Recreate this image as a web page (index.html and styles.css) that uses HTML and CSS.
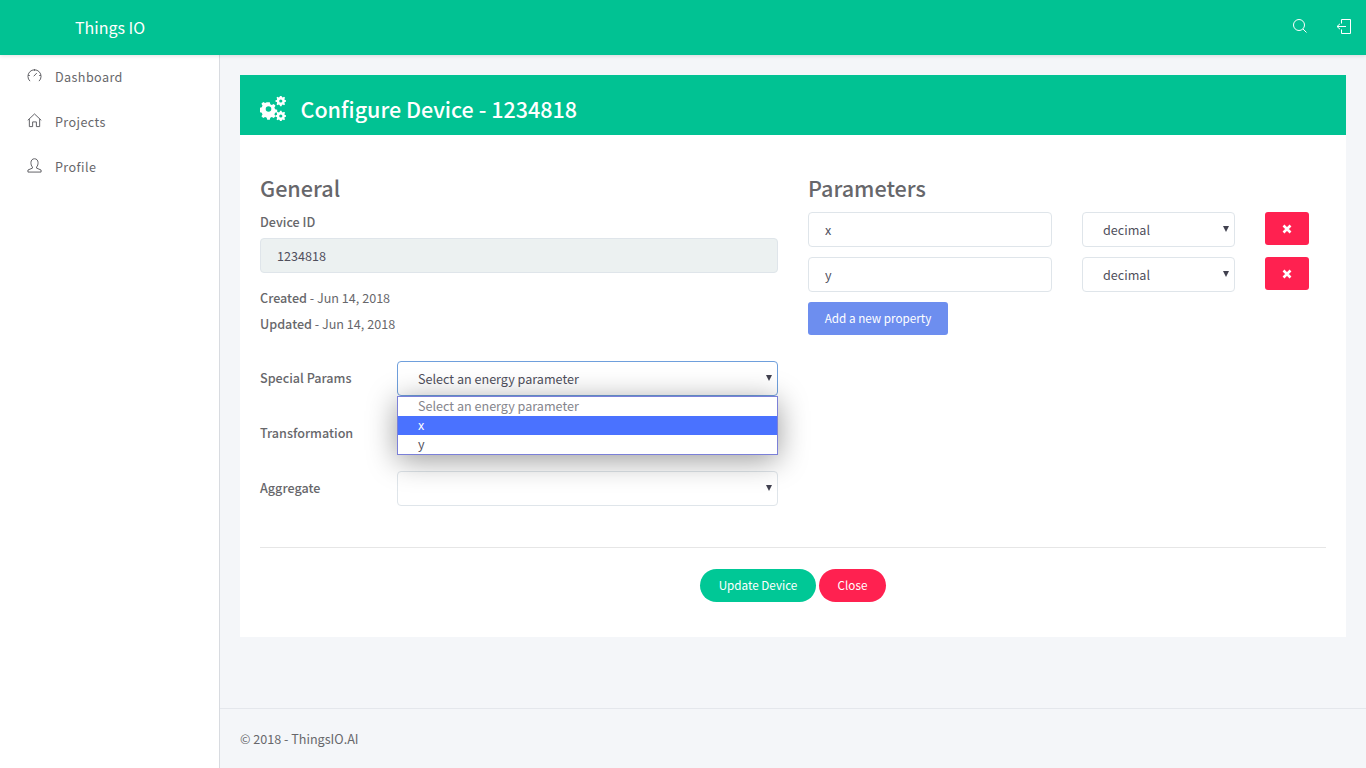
FILE: index.html
```html
<!DOCTYPE html>
<html>

<head>
    <title>Things IO - Configure Device</title>
    <meta charset="UTF-8">
    <link rel="stylesheet" href="styles.css">
</head>

<body>
    <header class="topbar">
        <span class="brand">Things IO</span>
        <div class="top-icons">
            <svg class="top-icon" viewBox="0 0 16 16" width="16" height="16">
                <circle cx="8" cy="6" r="5.5" />
                <path d="M12 10L15.5 13.5" />
            </svg>
            <svg class="top-icon" viewBox="0 0 16 16" width="16" height="16">
                <path d="M5.5 4.5V.5H14.5V14.5H5.5V10.5" />
                <path d="M10 7.5H1M4 4.8L1 7.5L4 10.2" />
            </svg>
        </div>
    </header>

    <div class="layout">
        <nav class="sidebar">
            <a class="nav-item">
                <svg class="nav-icon" viewBox="0 0 16 16" width="15" height="15">
                    <path d="M3.2 14A7 7 0 1 1 12.8 14" />
                    <path d="M7.2 8.8L10.4 5.4" />
                    <path d="M8 1.2V3M1.2 8H3M13 8H14.8" />
                </svg>
                Dashboard
            </a>
            <a class="nav-item">
                <svg class="nav-icon" viewBox="0 0 16 16" width="15" height="15">
                    <path d="M.8 7.8L8 1L15.2 7.8" />
                    <path d="M2.5 6.5V14.5H6V9.5H10V14.5H13.5V6.5" />
                </svg>
                Projects
            </a>
            <a class="nav-item">
                <svg class="nav-icon" viewBox="0 0 16 16" width="15" height="15">
                    <path d="M5.8 9.6C4.5 8.4 4.2 6.5 4.2 5C4.2 2.4 5.8 .8 8 .8S11.8 2.4 11.8 5C11.8 6.5 11.5 8.4 10.2 9.6V10.8L15 12.8V15H1V12.8L5.8 10.8Z" />
                </svg>
                Profile
            </a>
        </nav>

        <main class="content">
            <div class="page">
                <section class="card">
                    <div class="card-head">
                        <svg class="gears" viewBox="0 0 26 25" width="26" height="25">
                            <path transform="translate(-.8 1.6)" fill-rule="evenodd" d="M8 4.6h2.6l.5 2.1 1.5.7 1.9-1.1 1.8 1.8-1.1 1.9.7 1.6 2.1.5v2.6l-2.1.5-.7 1.6 1.1 1.9-1.8 1.8-1.9-1.1-1.5.7-.5 2.1H8l-.5-2.1-1.6-.7-1.9 1.1-1.8-1.8 1.1-1.9-.7-1.6-2.1-.5V10.1l2.1-.5.7-1.6-1.1-1.9 1.8-1.8 1.9 1.1 1.6-.7zM9.3 8.6a2.8 2.8 0 1 0 0 5.6 2.8 2.8 0 0 0 0-5.6z" />
                            <path transform="translate(.3 -.3)" fill-rule="evenodd" d="M19.7 0h1.6l.3 1.3 1 .4 1.1-.7 1.1 1.1-.7 1.1.4 1 1.3.3v1.6l-1.3.3-.4 1 .7 1.1-1.1 1.1-1.1-.7-1 .4-.3 1.3h-1.6l-.3-1.3-1-.4-1.1.7-1.1-1.1.7-1.1-.4-1-1.3-.3V4.5l1.3-.3.4-1-.7-1.1L17.2 1l1.1.7 1-.4z M20.5 3.7a1.6 1.6 0 1 0 0 3.2 1.6 1.6 0 0 0 0-3.2z" />
                            <path transform="translate(.3 3.5)" fill-rule="evenodd" d="M19.7 11.2h1.6l.3 1.3 1 .4 1.1-.7 1.1 1.1-.7 1.1.4 1 1.3.3v1.6l-1.3.3-.4 1 .7 1.1-1.1 1.1-1.1-.7-1 .4-.3 1.3h-1.6l-.3-1.3-1-.4-1.1.7-1.1-1.1.7-1.1-.4-1-1.3-.3v-1.6l1.3-.3.4-1-.7-1.1 1.1-1.1 1.1.7 1-.4zM20.5 14.9a1.6 1.6 0 1 0 0 3.2 1.6 1.6 0 0 0 0-3.2z" />
                        </svg>
                        <h1>Configure Device - 1234818</h1>
                    </div>

                    <div class="card-body">
                        <div class="columns">
                            <div class="col-general">
                                <h2>General</h2>
                                <label class="field-label">Device ID</label>
                                <input class="input input-readonly" type="text" value="1234818" readonly>
                                <p class="meta"><b>Created</b> - Jun 14, 2018</p>
                                <p class="meta"><b>Updated</b> - Jun 14, 2018</p>

                                <div class="select-rows">
                                    <div class="select-row">
                                        <label class="field-label">Special Params</label>
                                        <div class="select-wrap">
                                            <select class="select select-focus">
                                                <option>Select an energy parameter</option>
                                            </select>
                                            <ul class="popup">
                                                <li class="popup-first">Select an energy parameter</li>
                                                <li class="popup-active">x</li>
                                                <li>y</li>
                                            </ul>
                                        </div>
                                    </div>
                                    <div class="select-row">
                                        <label class="field-label">Transformation</label>
                                        <div class="select-wrap">
                                            <select class="select"></select>
                                        </div>
                                    </div>
                                    <div class="select-row">
                                        <label class="field-label">Aggregate</label>
                                        <div class="select-wrap">
                                            <select class="select"></select>
                                        </div>
                                    </div>
                                </div>
                            </div>

                            <div class="col-params">
                                <h2>Parameters</h2>
                                <div class="param-row">
                                    <input class="input param-name" type="text" value="x">
                                    <div class="select-wrap param-type">
                                        <select class="select">
                                            <option>decimal</option>
                                        </select>
                                    </div>
                                    <button class="btn-remove" type="button">
                                        <svg viewBox="0 0 10 10" width="10" height="10"><path d="M1.5 1.5L8.5 8.5M8.5 1.5L1.5 8.5" /></svg>
                                    </button>
                                </div>
                                <div class="param-row">
                                    <input class="input param-name" type="text" value="y">
                                    <div class="select-wrap param-type">
                                        <select class="select">
                                            <option>decimal</option>
                                        </select>
                                    </div>
                                    <button class="btn-remove" type="button">
                                        <svg viewBox="0 0 10 10" width="10" height="10"><path d="M1.5 1.5L8.5 8.5M8.5 1.5L1.5 8.5" /></svg>
                                    </button>
                                </div>
                                <button class="btn-add" type="button">Add a new property</button>
                            </div>
                        </div>

                        <div class="actions">
                            <button class="btn-pill btn-update" type="button">Update Device</button>
                            <button class="btn-pill btn-close" type="button">Close</button>
                        </div>
                    </div>
                </section>
            </div>

            <footer class="footer">&copy; 2018 - ThingsIO.AI</footer>
        </main>
    </div>
</body>

</html>
```
FILE: styles.css
```css
* {
    box-sizing: border-box;
}

body {
    font-family: "Noto Sans CJK SC", "Noto Sans", sans-serif;
    font-size: 12.6px;
    line-height: 20px;
    color: #67676b;
    margin: 0;
    height: 768px;
    overflow: hidden;
    background-color: #f4f6f9;
}

.topbar {
    height: 55px;
    background-color: #01c293;
    color: white;
    display: flex;
    align-items: center;
    justify-content: space-between;
    padding: 0 14px 0 75px;
    box-shadow: 0 1px 4px rgba(0, 0, 0, 0.12);
    position: relative;
}

.brand {
    font-size: 16px;
    margin-top: -1px;
}

.top-icons {
    display: flex;
    gap: 29px;
    margin-bottom: 1px;
}

.top-icon {
    fill: none;
    stroke: white;
    stroke-width: 1;
}

.layout {
    display: flex;
    height: 713px;
}

.sidebar {
    width: 220px;
    flex-shrink: 0;
    background-color: white;
    border-right: 1px solid #d8dbe0;
}

.nav-item {
    display: flex;
    align-items: center;
    gap: 13px;
    height: 45px;
    padding: 0 0 2px 27px;
    letter-spacing: 0.4px;
    color: #67676b;
    line-height: 18px;
}

.nav-icon {
    fill: none;
    stroke: #5a5a5f;
    stroke-width: 1;
    margin-top: -2px;
}

.content {
    flex: 1;
    display: flex;
    flex-direction: column;
}

.page {
    flex: 1;
    padding: 20px 20px 0;
}

.card {
    background-color: white;
    height: 562px;
}

.card-head {
    height: 60px;
    background-color: #01c293;
    color: white;
    display: flex;
    align-items: center;
    gap: 14.5px;
    padding: 8px 0 0 20px;
}

.gears {
    fill: white;
    margin-top: -2px;
}

h1 {
    margin: 0;
    font-size: 21.5px;
    line-height: 30px;
    font-weight: 500;
    margin-top: -1px;
}

.card-body {
    padding: 40px 20px 0 20px;
}

.columns {
    display: flex;
    gap: 30px;
    height: 373px;
    border-bottom: 1px solid #e6e6e6;
}

.col-general {
    width: 518px;
}

.col-params {
    flex: 1;
}

h2 {
    margin: -1px 0 10px;
    font-size: 21.6px;
    line-height: 28px;
    font-weight: 500;
}

.field-label {
    display: block;
    font-weight: 500;
    line-height: 20px;
    color: #67676b;
}

.input {
    display: block;
    height: 35px;
    border: 1px solid #dfe5ea;
    border-radius: 4px;
    padding: 0 16px;
    font-family: inherit;
    font-size: 12.6px;
    color: #4f4f5c;
    background-color: white;
    outline: none;
}

.input-readonly {
    width: 100%;
    margin-top: 6px;
    background-color: #ecf1f1;
}

.meta {
    margin: 0;
    height: 26px;
    line-height: 26px;
}

.meta:first-of-type {
    margin-top: 12px;
}

.meta b {
    font-weight: 500;
}

.select-rows {
    margin-top: 24px;
}

.select-row {
    display: flex;
    align-items: center;
    height: 35px;
    margin-bottom: 20px;
}

.select-row .field-label {
    width: 137px;
    flex-shrink: 0;
    margin-top: -2px;
}

.select-wrap {
    flex: 1;
    position: relative;
}

/* the little native arrow, drawn so it sits where the old menulist one did */
.select-wrap::after {
    content: "";
    position: absolute;
    top: 14px;
    right: 6px;
    border-top: 6px solid #41414f;
    border-left: 3px solid transparent;
    border-right: 3px solid transparent;
}

.select {
    display: block;
    width: 100%;
    height: 35px;
    border: 1px solid #dfe5ea;
    border-radius: 4px;
    padding: 0 20px;
    font-family: inherit;
    font-size: 12.6px;
    color: #4f4f5c;
    background-color: white;
    outline: none;
    appearance: none;
}

.select-focus {
    border-color: #6f9fdc;
}

.popup {
    list-style-type: none;
    position: absolute;
    top: 35px;
    left: 0;
    right: 0;
    margin: 0;
    padding: 0;
    border: 1px solid #7b80d8;
    background-color: white;
    box-shadow: 0 5px 30px rgba(0, 0, 0, 0.4);
    z-index: 5;
}

.popup li {
    height: 19px;
    line-height: 17px;
    padding-left: 20px;
    color: #4f4f5c;
}

.popup .popup-first {
    color: #85858c;
}

.popup .popup-active {
    background-color: #4a72ff;
    color: white;
}

.param-row {
    display: flex;
    align-items: flex-start;
    height: 35px;
    margin-bottom: 10px;
}

.param-name {
    width: 244px;
}

.param-type {
    flex: none;
    width: 153px;
    margin-left: 30px;
}

.btn-remove {
    width: 44px;
    height: 33px;
    margin-left: 30px;
    border: none;
    border-radius: 3px;
    background-color: #ff2150;
    display: flex;
    align-items: center;
    justify-content: center;
    padding: 0;
}

.btn-remove svg {
    fill: none;
    stroke: white;
    stroke-width: 2.6;
}

.btn-add {
    display: block;
    width: 140px;
    height: 33px;
    border: none;
    border-radius: 3px;
    background-color: #6d8eef;
    color: white;
    font-family: inherit;
    font-size: 11.7px;
    padding: 0 0 2px;
}

.actions {
    display: flex;
    justify-content: center;
    gap: 3px;
    margin-top: 21px;
}

.btn-pill {
    height: 33px;
    border: none;
    border-radius: 17px;
    color: white;
    font-family: inherit;
    font-size: 11.7px;
    padding: 0 0 2px;
}

.btn-update {
    width: 116px;
    background-color: #00c896;
}

.btn-close {
    width: 67px;
    background-color: #ff2150;
}

.footer {
    height: 60px;
    border-top: 1px solid #e4e7ec;
    padding: 20px 20px 0;
    color: #67676b;
}
```
